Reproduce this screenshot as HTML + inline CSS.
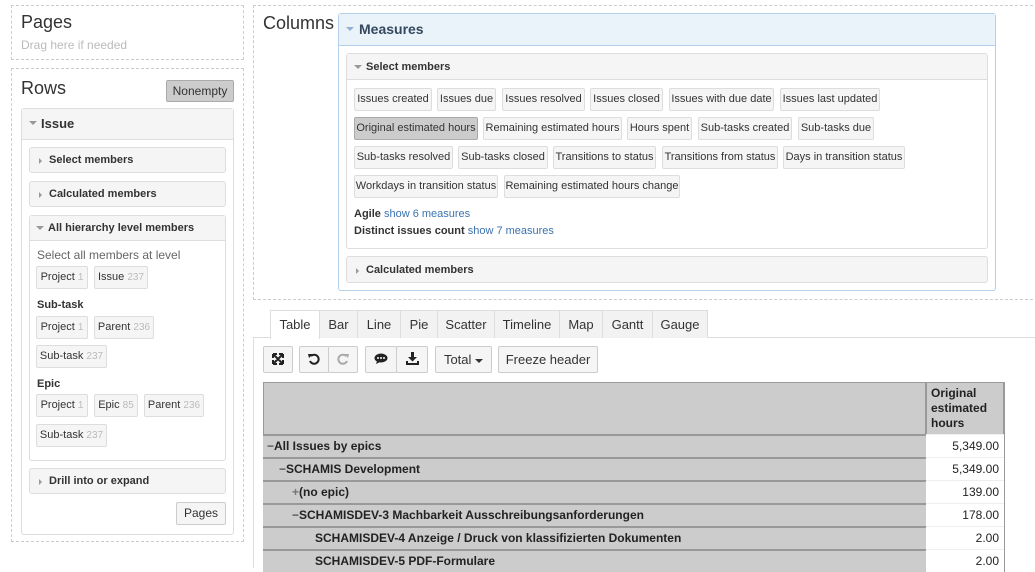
<!DOCTYPE html>
<html><head><meta charset="utf-8"><style>
*{box-sizing:border-box;margin:0;padding:0}
body{width:1035px;height:568px;overflow:hidden;background:#fff;font-family:"Liberation Sans",Arial,sans-serif;color:#333;position:relative;font-size:12px}
.a{position:absolute}
.dash{position:absolute;border:1px dashed #ccc}
.h{font-size:18px;color:#333}
.pnl{position:absolute;border:1px solid #ddd;border-radius:3px;background:#fff}
.ph{background:#f5f5f5;border-bottom:1px solid #ddd;font-weight:bold;color:#333}
.sp{position:absolute;border:1px solid #ddd;border-radius:3px;background:#f5f5f5;font-weight:bold;font-size:11px;padding-left:19px;line-height:25px}
.tri{display:inline-block;width:0;height:0;border-left:3px solid #999;border-top:3px solid transparent;border-bottom:3px solid transparent;position:absolute;left:9px;top:10px}
.trd{display:inline-block;width:0;height:0;border-top:4px solid #999;border-left:4px solid transparent;border-right:4px solid transparent;position:absolute}
.chip{position:absolute;height:23px;border:1px solid #ddd;border-radius:2px;background:#f5f5f5;font-size:11px;line-height:21px;text-align:center;white-space:nowrap;color:#333;overflow:hidden}
.chip i{font-style:normal;color:#bbb;font-size:10px}
.sel{background:#ccc;border-color:#aaa}
.tab{position:absolute;top:310px;height:28px;border:1px solid #ddd;border-bottom:none;background:#f2f2f2;font-size:13px;line-height:27px;text-align:center;color:#333}
.btn{position:absolute;top:346px;height:27px;border:1px solid #ccc;border-radius:2px;background:#f5f5f5;font-size:13px;line-height:25px;text-align:center}
.row{position:absolute;left:263px;width:663px;height:23px;background:#ccc;border-top:2px solid #999;font-weight:bold;font-size:12px;line-height:20px;color:#222}
.val{position:absolute;left:926px;width:78px;height:23px;background:#fff;border-top:1px solid #eee;text-align:right;padding-right:5px;font-size:12px;line-height:22px;color:#222}
</style></head><body>
<div class="dash" style="left:11px;top:5px;width:233px;height:55px"></div>
<div class="a h" style="left:21px;top:12px">Pages</div>
<div class="a" style="left:21px;top:38px;color:#bbb;font-size:12px">Drag here if needed</div>
<div class="dash" style="left:11px;top:68px;width:233px;height:474px"></div>
<div class="a h" style="left:21px;top:78px">Rows</div>
<div class="a" style="left:166px;top:80px;width:68px;height:22px;background:#ccc;border:1px solid #aaa;border-radius:2px;text-align:center;line-height:20px;font-size:12px">Nonempty</div>
<div class="pnl" style="left:21px;top:108px;width:213px;height:427px">
 <div class="ph" style="height:31px;line-height:29px;font-size:13px;padding-left:19px;position:relative"><span class="trd" style="left:7px;top:12px"></span>Issue</div>
</div>
<div class="sp" style="left:29px;top:147px;width:197px;height:26px"><span class="tri"></span>Select members</div>
<div class="sp" style="left:29px;top:181px;width:197px;height:26px"><span class="tri"></span>Calculated members</div>
<div class="pnl" style="left:29px;top:215px;width:197px;height:246px">
 <div class="ph" style="height:25px;line-height:24px;font-size:11px;padding-left:18px;position:relative"><span class="trd" style="left:6px;top:10px"></span>All hierarchy level members</div>
</div>
<div class="a" style="left:37px;top:248px;color:#666">Select all members at level</div>
<div class="chip" style="left:36px;top:266px;width:52px">Project <i>1</i></div>
<div class="chip" style="left:94px;top:266px;width:54px">Issue <i>237</i></div>
<div class="a" style="left:37px;top:299px;font-weight:bold;font-size:11px">Sub-task</div>
<div class="chip" style="left:36px;top:316px;width:52px">Project <i>1</i></div>
<div class="chip" style="left:94px;top:316px;width:60px">Parent <i>236</i></div>
<div class="chip" style="left:36px;top:345px;width:71px">Sub-task <i>237</i></div>
<div class="a" style="left:37px;top:378px;font-weight:bold;font-size:11px">Epic</div>
<div class="chip" style="left:36px;top:394px;width:52px">Project <i>1</i></div>
<div class="chip" style="left:94px;top:394px;width:44px">Epic <i>85</i></div>
<div class="chip" style="left:144px;top:394px;width:60px">Parent <i>236</i></div>
<div class="chip" style="left:36px;top:424px;width:71px">Sub-task <i>237</i></div>
<div class="sp" style="left:29px;top:468px;width:197px;height:26px"><span class="tri"></span>Drill into or expand</div>
<div class="a" style="left:176px;top:502px;width:50px;height:23px;border:1px solid #ccc;border-radius:2px;background:#f5f5f5;text-align:center;line-height:21px">Pages</div>

<div class="dash" style="left:253px;top:5px;width:800px;height:295px"></div>
<div class="a h" style="left:263px;top:13px">Columns</div>
<div class="a" style="left:338px;top:13px;width:658px;height:278px;border:1px solid #b5d0ea;border-radius:3px;background:#fff">
 <div style="height:32px;background:#eaf2fa;border-bottom:1px solid #b5d0ea;font-weight:bold;font-size:14px;line-height:30px;padding-left:20px;position:relative;color:#34495e"><span class="trd" style="left:7px;top:13px;border-top-color:#8fb1d4"></span>Measures</div>
</div>
<div class="pnl" style="left:346px;top:53px;width:642px;height:196px">
 <div class="ph" style="height:26px;line-height:26px;font-size:11px;padding-left:19px;position:relative"><span class="trd" style="left:7px;top:11px"></span>Select members</div>
</div>
<div class="chip" style="left:354px;top:88px;width:78px">Issues created</div>
<div class="chip" style="left:437px;top:88px;width:59px">Issues due</div>
<div class="chip" style="left:502px;top:88px;width:83px">Issues resolved</div>
<div class="chip" style="left:590px;top:88px;width:73px">Issues closed</div>
<div class="chip" style="left:669px;top:88px;width:105px">Issues with due date</div>
<div class="chip" style="left:780px;top:88px;width:100px">Issues last updated</div>
<div class="chip sel" style="left:354px;top:117px;width:124px">Original estimated hours</div>
<div class="chip" style="left:483px;top:117px;width:139px">Remaining estimated hours</div>
<div class="chip" style="left:627px;top:117px;width:65px">Hours spent</div>
<div class="chip" style="left:698px;top:117px;width:94px">Sub-tasks created</div>
<div class="chip" style="left:798px;top:117px;width:76px">Sub-tasks due</div>
<div class="chip" style="left:354px;top:146px;width:99px">Sub-tasks resolved</div>
<div class="chip" style="left:458px;top:146px;width:90px">Sub-tasks closed</div>
<div class="chip" style="left:553px;top:146px;width:103px">Transitions to status</div>
<div class="chip" style="left:662px;top:146px;width:116px">Transitions from status</div>
<div class="chip" style="left:783px;top:146px;width:122px">Days in transition status</div>
<div class="chip" style="left:354px;top:175px;width:144px">Workdays in transition status</div>
<div class="chip" style="left:504px;top:175px;width:176px">Remaining estimated hours change</div>
<div class="a" style="left:354px;top:208px;font-size:11px"><b>Agile</b> <span style="color:#3b73af">show 6 measures</span></div>
<div class="a" style="left:354px;top:225px;font-size:11px"><b>Distinct issues count</b> <span style="color:#3b73af">show 7 measures</span></div>
<div class="sp" style="left:346px;top:256px;width:642px;height:27px;line-height:27px"><span class="tri" style="top:11px"></span>Calculated members</div>

<div class="a" style="left:253px;top:337px;width:782px;height:1px;background:#ddd"></div>
<div class="a" style="left:253px;top:337px;width:1px;height:231px;background:#ddd"></div>
<div class="tab" style="left:270px;width:50px;background:#fff;height:29px">Table</div>
<div class="tab" style="left:319px;width:39px">Bar</div>
<div class="tab" style="left:357px;width:44px">Line</div>
<div class="tab" style="left:400px;width:38px">Pie</div>
<div class="tab" style="left:437px;width:58px">Scatter</div>
<div class="tab" style="left:494px;width:66px">Timeline</div>
<div class="tab" style="left:559px;width:44px">Map</div>
<div class="tab" style="left:602px;width:51px">Gantt</div>
<div class="tab" style="left:652px;width:56px">Gauge</div>

<div class="btn" style="left:263px;width:30px"><svg width="12" height="12" viewBox="0 0 12 12" style="margin-top:6px"><path d="M1 1L11 11M11 1L1 11M1 1h4M1 1v4M11 1h-4M11 1v4M1 11h4M1 11v-4M11 11h-4M11 11v-4" stroke="#222" stroke-width="2" fill="none"/></svg></div>
<div class="btn" style="left:299px;width:30px"><svg width="12" height="12" viewBox="0 0 12 12" style="margin-top:6px"><path d="M3 3A4.5 4.5 0 1 1 2 8" stroke="#222" stroke-width="2" fill="none"/><path d="M0 1l5 0-4 4z" fill="#222"/></svg></div>
<div class="btn" style="left:328px;width:30px"><svg width="12" height="12" viewBox="0 0 12 12" style="margin-top:6px"><path d="M9 3A4.5 4.5 0 1 0 10 8" stroke="#aaa" stroke-width="2" fill="none"/><path d="M12 1l-5 0 4 4z" fill="#aaa"/></svg></div>
<div class="btn" style="left:365px;width:32px"><svg width="14" height="12" viewBox="0 0 14 12" style="margin-top:6px"><ellipse cx="7" cy="5" rx="6.5" ry="4.5" fill="#222"/><path d="M3 8l-1 3 4-2z" fill="#222"/><circle cx="4" cy="5" r="1" fill="#fff"/><circle cx="7" cy="5" r="1" fill="#fff"/><circle cx="10" cy="5" r="1" fill="#fff"/></svg></div>
<div class="btn" style="left:396px;width:32px"><svg width="13" height="13" viewBox="0 0 13 13" style="margin-top:5px"><path d="M5 0h3v5h3l-4.5 4.5L2 5h3z" fill="#222"/><path d="M0 9h2v2h9v-2h2v4H0z" fill="#222"/></svg></div>
<div class="btn" style="left:435px;width:57px">Total <span style="display:inline-block;border-top:4px solid #333;border-left:4px solid transparent;border-right:4px solid transparent;vertical-align:middle"></span></div>
<div class="btn" style="left:498px;width:100px">Freeze header</div>

<div class="a" style="left:263px;top:382px;width:742px;height:190px;background:#999"></div>
<div class="a" style="left:264px;top:383px;width:661px;height:51px;background:#ccc"></div>
<div class="a" style="left:927px;top:383px;width:76px;height:51px;background:#ccc;font-weight:bold;font-size:12px;line-height:15px;padding:3px 4px;color:#222">Original estimated hours</div>
<div class="row" style="top:434px;padding-left:4px"><span style="color:#555">−</span>All Issues by epics</div>
<div class="row" style="top:457px;padding-left:16px"><span style="color:#555">−</span>SCHAMIS Development</div>
<div class="row" style="top:480px;padding-left:29px"><span style="color:#777">+</span>(no epic)</div>
<div class="row" style="top:503px;padding-left:29px"><span style="color:#555">−</span>SCHAMISDEV-3 Machbarkeit Ausschreibungsanforderungen</div>
<div class="row" style="top:526px;padding-left:52px">SCHAMISDEV-4 Anzeige / Druck von klassifizierten Dokumenten</div>
<div class="row" style="top:549px;padding-left:52px">SCHAMISDEV-5 PDF-Formulare</div>
<div class="val" style="top:434px">5,349.00</div>
<div class="val" style="top:457px">5,349.00</div>
<div class="val" style="top:480px">139.00</div>
<div class="val" style="top:503px">178.00</div>
<div class="val" style="top:526px">2.00</div>
<div class="val" style="top:549px">2.00</div>
</body></html>
